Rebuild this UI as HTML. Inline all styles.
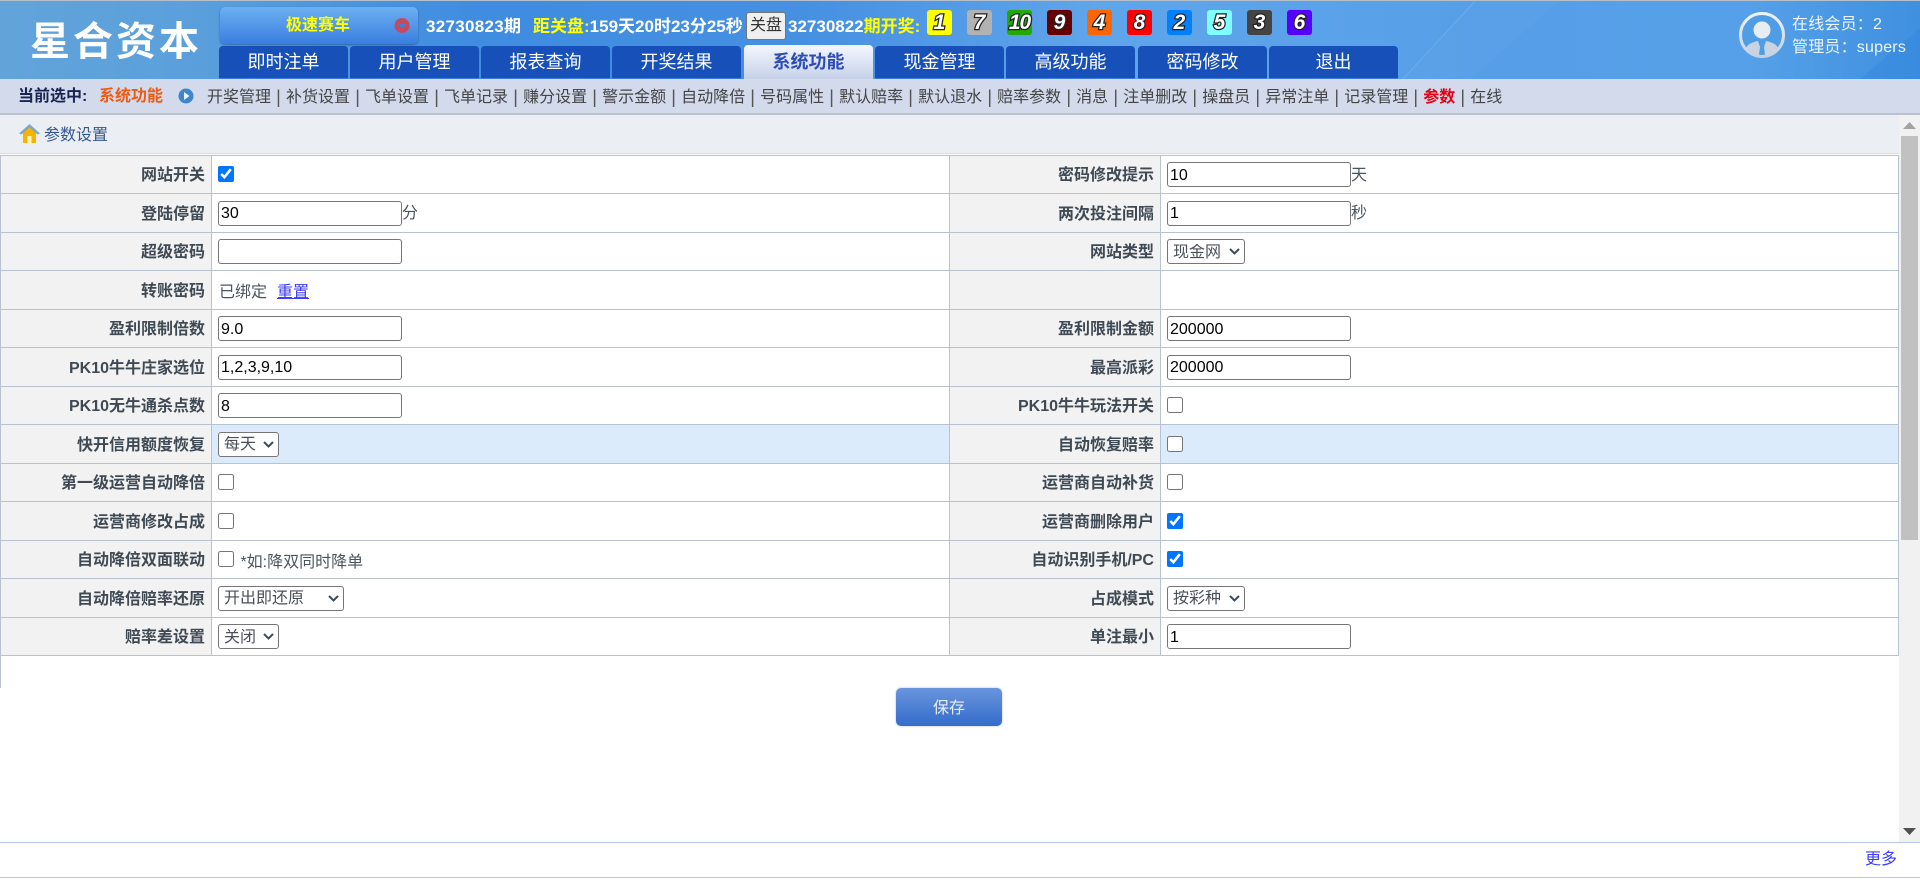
<!DOCTYPE html>
<html lang="zh">
<head>
<meta charset="utf-8">
<title>星合资本</title>
<style>
html,body{margin:0;padding:0;width:1920px;height:885px;overflow:hidden;background:#fff}
body{position:relative;font-family:"Liberation Sans","Noto Sans CJK SC",sans-serif;font-size:16px;color:#3f4a55}
*{box-sizing:border-box}
.a{position:absolute;white-space:nowrap}
#hd{position:absolute;left:0;top:0;width:1920px;height:79px;background:linear-gradient(90deg,#62a4da 0,#5a9fdc 200px,#3f8ce0 480px,#4690e2 800px,#5fa5ea 1100px,#569fe8 1500px,#55a0e8 1750px,#3f90e0 1920px);overflow:hidden}
.logo{left:30px;top:18px;font-size:40px;line-height:48px;font-weight:bold;color:#fff;letter-spacing:3px}
.dd{left:220px;top:7px;width:198px;height:37px;border-radius:5px;background:linear-gradient(#6cb0f2,#3a7ee0);box-shadow:0 1px 2px rgba(20,50,110,.5)}
.dd span{position:absolute;left:66px;top:7px;font-size:16px;line-height:24px;font-weight:bold;color:#ffff00}
.t{height:24px;line-height:24px;top:15px;font-size:17px;font-weight:bold;color:#fff}
.y{color:#ffff00}
.close{left:746px;top:12px;width:40px;height:28px;background:#efefef;border:1px solid #767676;border-radius:3px;font-size:16px;line-height:26px;text-align:center;color:#333}
.b{top:10px;width:25px;height:25px;border-radius:3px;text-align:center;font-size:21px;line-height:25px;font-weight:bold;font-style:italic;color:#fff;-webkit-text-stroke:2.5px #222;paint-order:stroke fill}
.tab{top:46px;width:129px;height:33px;background:#1650b8;border-radius:4px 4px 0 0;border-bottom:1px solid #3b7ad6;color:#fff;font-size:18px;line-height:32px;text-align:center}
.tab.on{top:45px;height:34px;border:0;background:linear-gradient(#f4f7ff,#c6d1e8);color:#2b4db5;font-weight:bold;line-height:34px}
.u{left:1792px;font-size:16px;line-height:22px;color:#eef4fc;letter-spacing:.2px}
#sn{position:absolute;left:0;top:79px;width:1920px;height:36px;background:#d2daec;border-bottom:2px solid #bcc2cd}
#sn .c{top:6px;line-height:24px;font-size:16px}
#menu{left:207px;top:7px;display:flex;line-height:24px;color:#444}
#menu i{font-style:normal;width:15px;text-align:center;color:#555;font-size:18px;line-height:23px}
#bc{position:absolute;left:0;top:115px;width:1900px;height:38px;background:#ebeef2}
#tb{position:absolute;left:0;top:155px;width:1899px;border-collapse:separate;border-spacing:0;table-layout:fixed;background:#fff;border-top:1px solid #b8c2d0}
#tb td{padding:0;border-bottom:1px solid #b8c2d0;border-right:1px solid #b8c2d0;vertical-align:middle;white-space:nowrap}
#tb td.l{background:#f2f2f2;text-align:right;font-weight:bold;padding:0 6px 3px 0;color:#3f4a55}
#tb td.v{padding-left:6px;color:#4a5560}
#tb tr td:first-child{border-left:1px solid #b8c2d0}
#tb tr.h td.v{background:#dcebfb}
.n{vertical-align:middle;line-height:16px;position:relative;top:1px}
input[type=text]{width:184px;height:25px;border:1px solid #767676;border-radius:3px;padding:2px 2px 0;font:16px "Liberation Sans","Noto Sans CJK SC",sans-serif;color:#000;background:#fff;vertical-align:middle;margin:0}
.s{position:relative;display:inline-block;height:25px;vertical-align:middle;line-height:0}
.s svg{position:absolute;right:5px;top:9px}
select{-webkit-appearance:none;appearance:none;display:block;height:25px;width:100%;border:1px solid #767676;border-radius:3px;font:16px "Liberation Sans","Noto Sans CJK SC",sans-serif;color:#4a5058;background:#fff;margin:0;padding:1px 0 0 5px}
input[type=checkbox]{width:16px;height:16px;margin:0;vertical-align:middle;accent-color:#0075ff}
a{color:#3c3cff;text-decoration:underline}
.save{left:896px;top:688px;width:106px;height:38px;border-radius:5px;background:linear-gradient(#6a95dc,#336ccb);box-shadow:0 0 2px #a8bde0;color:#e8eef8;font-size:16px;line-height:41px;text-align:center}
#sb{position:absolute;left:1899px;top:115px;width:21px;height:728px;background:#f1f1f1}
#sb div{position:absolute;left:2px;top:21px;width:17px;height:404px;background:#c1c1c1}
</style>
</head>
<body>
<div id="hd">
<svg class="a" style="left:0;top:0" width="1920" height="79"><path d="M1476 0L1403 79" stroke="#8fc0ef" stroke-width="1" opacity=".35" fill="none"/><path d="M1476 0L1560 0L1470 79L1403 79Z" fill="#fff" opacity=".02"/><path d="M1860 79L1920 28V79Z" fill="#2f84dc" opacity=".35"/></svg>
<div class="a" style="left:0;top:0;width:1920px;height:1px;background:#b5c0cc"></div>
<div class="a logo">星合资本</div>
<div class="a dd"><span>极速赛车</span>
<svg class="a" style="left:174px;top:10px" width="16" height="17"><circle cx="8" cy="8.500" r="7.500" fill="#c64a5e"/><path d="M3.500 6.500H12.500L8 11.500Z" fill="#3f7fd8"/></svg></div>
<div class="a t" style="left:426px;letter-spacing:.3px">32730823期</div>
<div class="a t" style="left:533px"><span class="y">距关盘:</span>159天20时23分25秒</div>
<div class="a close">关盘</div>
<div class="a t" style="left:788px">32730822<span class="y">期开奖:</span></div>
<div class="a b" style="left:927px;background:#ffff00">1</div>
<div class="a b" style="left:967px;background:#b2b2b2">7</div>
<div class="a b" style="left:1007px;background:#22aa00;letter-spacing:-1px">10</div>
<div class="a b" style="left:1047px;background:#660000">9</div>
<div class="a b" style="left:1087px;background:#ff6600">4</div>
<div class="a b" style="left:1127px;background:#ff0000">8</div>
<div class="a b" style="left:1167px;background:#0080ff">2</div>
<div class="a b" style="left:1207px;background:#80ffff">5</div>
<div class="a b" style="left:1247px;background:#444444">3</div>
<div class="a b" style="left:1287px;background:#5500ff">6</div>
<div class="a tab" style="left:219px">即时注单</div>
<div class="a tab" style="left:350px">用户管理</div>
<div class="a tab" style="left:481px">报表查询</div>
<div class="a tab" style="left:612px">开奖结果</div>
<div class="a tab on" style="left:744px">系统功能</div>
<div class="a tab" style="left:875px">现金管理</div>
<div class="a tab" style="left:1006px">高级功能</div>
<div class="a tab" style="left:1138px">密码修改</div>
<div class="a tab" style="left:1269px">退出</div>
<svg class="a" style="left:1738px;top:11px" width="48" height="48" viewBox="0 0 48 48"><defs><linearGradient id="r" x1="0" y1="0" x2="0" y2="1"><stop offset="0" stop-color="#eef3f9"/><stop offset="1" stop-color="#c4d0e0"/></linearGradient></defs><circle cx="24" cy="24" r="21.500" fill="#4f9de4" stroke="url(#r)" stroke-width="3"/><circle cx="24" cy="19" r="8.500" fill="#e8edf5"/><path d="M8 37Q10 32 20 30L22 36L21 44Q12 43 8 37Z" fill="#c8d3e3"/><path d="M40 37Q38 32 28 30L26 36L27 44Q36 43 40 37Z" fill="#c8d3e3"/></svg>
<div class="a u" style="top:14px">在线会员：2</div>
<div class="a u" style="top:37px">管理员：supers</div>
</div>
<div id="sn">
<div class="a c" style="left:18px;font-weight:bold;color:#1a2450">当前选中:</div>
<div class="a c" style="left:99px;font-weight:bold;color:#f25a10">系统功能</div>
<svg class="a" style="left:178px;top:9px" width="16" height="16"><circle cx="8" cy="8" r="7.500" fill="#3f86cc"/><path d="M6 4L11.500 8L6 12Z" fill="#e8f2fb"/></svg>
<div class="a" id="menu"><span>开奖管理</span><i>|</i><span>补货设置</span><i>|</i><span>飞单设置</span><i>|</i><span>飞单记录</span><i>|</i><span>赚分设置</span><i>|</i><span>警示金额</span><i>|</i><span>自动降倍</span><i>|</i><span>号码属性</span><i>|</i><span>默认赔率</span><i>|</i><span>默认退水</span><i>|</i><span>赔率参数</span><i>|</i><span>消息</span><i>|</i><span>注单删改</span><i>|</i><span>操盘员</span><i>|</i><span>异常注单</span><i>|</i><span>记录管理</span><i>|</i><span style="color:#e60012;font-weight:bold">参数</span><i>|</i><span>在线</span></div>
</div>
<div id="bc">
<svg class="a" style="left:18px;top:8px" width="22" height="21"><path d="M5 10V20H18V10L11.500 4Z" fill="#f4b400"/><path d="M9.500 13H13.500V20H9.500Z" fill="#fff3c0"/><path d="M1 10.500L11.500 1L22 10.500L19.500 11.500L11.500 4.500L3.500 11.500Z" fill="#7aa8cf"/></svg>
<div class="a" style="left:44px;top:9px;line-height:24px;color:#35598f">参数设置</div>
</div>
<div class="a" style="left:0;top:153px;width:1900px;height:1px;background:#d5dbe3"></div>
<table id="tb">
<colgroup><col style="width:212px"><col style="width:738px"><col style="width:211px"><col style="width:738px"></colgroup>
<tr style="height:38px"><td class="l">网站开关</td><td class="v"><input type="checkbox" checked></td><td class="l">密码修改提示</td><td class="v"><input type="text" value="10"><span class="n">天</span></td></tr>
<tr style="height:39px"><td class="l">登陆停留</td><td class="v"><input type="text" value="30"><span class="n">分</span></td><td class="l">两次投注间隔</td><td class="v"><input type="text" value="1"><span class="n">秒</span></td></tr>
<tr style="height:38px"><td class="l">超级密码</td><td class="v"><input type="text" value=""></td><td class="l">网站类型</td><td class="v"><span class="s" style="width:78px"><select><option>现金网</option></select><svg width="11" height="7"><path d="M1 1L5.500 5.500L10 1" fill="none" stroke="#3f4a55" stroke-width="2"/></svg></span></td></tr>
<tr style="height:39px"><td class="l">转账密码</td><td class="v"><span style="margin-left:1px">已绑定</span><a style="margin-left:10px">重置</a></td><td class="l"></td><td class="v"></td></tr>
<tr style="height:38px"><td class="l">盈利限制倍数</td><td class="v"><input type="text" value="9.0"></td><td class="l">盈利限制金额</td><td class="v"><input type="text" value="200000"></td></tr>
<tr style="height:39px"><td class="l">PK10牛牛庄家选位</td><td class="v"><input type="text" value="1,2,3,9,10"></td><td class="l">最高派彩</td><td class="v"><input type="text" value="200000"></td></tr>
<tr style="height:38px"><td class="l">PK10无牛通杀点数</td><td class="v"><input type="text" value="8"></td><td class="l">PK10牛牛玩法开关</td><td class="v"><input type="checkbox"></td></tr>
<tr class="h" style="height:39px"><td class="l">快开信用额度恢复</td><td class="v"><span class="s" style="width:61px"><select><option>每天</option></select><svg width="11" height="7"><path d="M1 1L5.500 5.500L10 1" fill="none" stroke="#3f4a55" stroke-width="2"/></svg></span></td><td class="l">自动恢复赔率</td><td class="v"><input type="checkbox"></td></tr>
<tr style="height:38px"><td class="l">第一级运营自动降倍</td><td class="v"><input type="checkbox"></td><td class="l">运营商自动补货</td><td class="v"><input type="checkbox"></td></tr>
<tr style="height:39px"><td class="l">运营商修改占成</td><td class="v"><input type="checkbox"></td><td class="l">运营商删除用户</td><td class="v"><input type="checkbox" checked></td></tr>
<tr style="height:38px"><td class="l">自动降倍双面联动</td><td class="v"><input type="checkbox" style="position:relative;top:-3px"> <span style="margin-left:2px">*如:降双同时降单</span></td><td class="l">自动识别手机/PC</td><td class="v"><input type="checkbox" checked></td></tr>
<tr style="height:39px"><td class="l">自动降倍赔率还原</td><td class="v"><span class="s" style="width:126px"><select><option>开出即还原</option></select><svg width="11" height="7"><path d="M1 1L5.500 5.500L10 1" fill="none" stroke="#3f4a55" stroke-width="2"/></svg></span></td><td class="l">占成模式</td><td class="v"><span class="s" style="width:78px"><select><option>按彩种</option></select><svg width="11" height="7"><path d="M1 1L5.500 5.500L10 1" fill="none" stroke="#3f4a55" stroke-width="2"/></svg></span></td></tr>
<tr style="height:38px"><td class="l">赔率差设置</td><td class="v"><span class="s" style="width:61px"><select><option>关闭</option></select><svg width="11" height="7"><path d="M1 1L5.500 5.500L10 1" fill="none" stroke="#3f4a55" stroke-width="2"/></svg></span></td><td class="l">单注最小</td><td class="v"><input type="text" value="1"></td></tr>
</table>
<div class="a" style="left:0;top:656px;width:1px;height:32px;background:#b8c2d0"></div>
<div class="a save">保存</div>
<div id="sb"><div></div>
<svg class="a" style="left:4px;top:7px" width="13" height="8"><path d="M6.500 0L13 7H0Z" fill="#a3a3a3"/></svg>
<svg class="a" style="left:4px;top:713px" width="13" height="8"><path d="M0 0H13L6.500 7Z" fill="#505050"/></svg>
</div>
<div class="a" style="left:0;top:842px;width:1920px;height:1px;background:#b8c8e8"></div>
<div class="a" style="left:1865px;top:848px;line-height:24px"><a style="text-decoration:none">更多</a></div>
<div class="a" style="left:0;top:877px;width:1920px;height:1px;background:#bccbe0"></div>
</body>
</html>
